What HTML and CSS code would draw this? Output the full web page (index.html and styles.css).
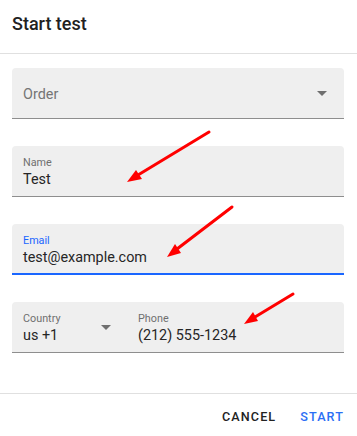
FILE: index.html
```html
<!DOCTYPE html>
<html lang="en">
<head>
    <meta charset="UTF-8">
    <meta name="viewport" content="width=device-width, initial-scale=1.0">
    <title>Start test</title>
    <link rel="stylesheet" href="styles.css">
</head>
<body>
    <div class="dialog">
        <h1 class="dialog-title">Start test</h1>
        <div class="dialog-content">
            <div class="field select-field">
                <span class="placeholder">Order</span>
                <span class="caret"></span>
            </div>
            <div class="field">
                <label class="field-label">Name</label>
                <div class="field-value">Test</div>
            </div>
            <div class="field focused">
                <label class="field-label">Email</label>
                <div class="field-value">test@example.com</div>
            </div>
            <div class="field phone-field">
                <div class="country">
                    <div>
                        <label class="field-label">Country</label>
                        <div class="field-value">us +1</div>
                    </div>
                    <span class="caret"></span>
                </div>
                <div class="phone">
                    <label class="field-label">Phone</label>
                    <div class="field-value">(212) 555-1234</div>
                </div>
            </div>
        </div>
        <div class="dialog-actions">
            <button class="btn">Cancel</button>
            <button class="btn primary">Start</button>
        </div>
    </div>

    <!-- annotation arrows drawn over the screenshot -->
    <svg class="annotations" width="357" height="436" viewBox="0 0 357 436">
        <g stroke="#ff0000" stroke-width="3" stroke-linecap="round" fill="#ff0000">
            <line x1="209" y1="132" x2="138" y2="175"/>
            <polygon stroke="none" points="127,182 136,170 142,179"/>
            <line x1="232" y1="207" x2="177" y2="249"/>
            <polygon stroke="none" points="167,257 175,244 181,253"/>
            <line x1="293" y1="294" x2="255" y2="317"/>
            <polygon stroke="none" points="244,324 253,312 258,321"/>
        </g>
    </svg>
</body>
</html>
```

FILE: styles.css
```css
body {
    margin: 0;
    font-family: 'Roboto', 'Noto Sans', sans-serif;
    background: #fff;
    color: #222;
    position: relative;
    width: 357px;
    height: 436px;
    overflow: hidden;
}
.dialog-title {
    margin: 0;
    height: 53px;
    line-height: 48px;
    padding: 0 12px;
    font-size: 18px;
    font-weight: 500;
    color: #212121;
    border-bottom: 1px solid #e0e0e0;
}
.dialog-content {
    padding: 14px 13px 40px 12px;
    display: flex;
    flex-direction: column;
    gap: 27px;
}
.field {
    background: #efefef;
    border-radius: 4px 4px 0 0;
    border-bottom: 1px solid #8e8e8e;
    padding: 10px 11px 7px;
}
.field-label {
    display: block;
    font-size: 10.8px;
    line-height: 14px;
    color: #6f6f6f;
}
.field-value {
    font-size: 14.4px;
    line-height: 19px;
    color: #262626;
}
.focused {
    border-bottom: 2px solid #1a66ff;
    padding-bottom: 6px;
}
.focused .field-label {
    color: #1a66ff;
}
.select-field {
    height: 51px;
    box-sizing: border-box;
    padding: 0 17px 0 11px;
    display: flex;
    align-items: center;
    justify-content: space-between;
}
.placeholder {
    font-size: 14.4px;
    color: #757575;
    margin-top: 3px;
}
.caret {
    width: 0;
    height: 0;
    border-left: 5px solid transparent;
    border-right: 5px solid transparent;
    border-top: 5px solid #6f6f6f;
}
.phone-field {
    display: flex;
    padding-left: 0;
    padding-right: 0;
}
.country {
    width: 115px;
    box-sizing: border-box;
    padding: 0 16px 0 11px;
    display: flex;
    justify-content: space-between;
    align-items: center;
}
.country .caret {
    margin-bottom: 2px;
}
.phone {
    padding-left: 11px;
}
.dialog-actions {
    border-top: 1px solid #e0e0e0;
    height: 42px;
    display: flex;
    justify-content: flex-end;
    align-items: center;
    padding: 0 6px;
    gap: 10px;
}
.btn {
    background: none;
    border: none;
    font-family: inherit;
    font-size: 12.6px;
    font-weight: 500;
    letter-spacing: 1.1px;
    text-transform: uppercase;
    color: #222;
    padding: 7px 7px;
    margin-top: 3px;
    cursor: pointer;
}
.btn.primary {
    color: #2a6ef5;
}
.annotations {
    position: absolute;
    top: 0;
    left: 0;
    pointer-events: none;
}
```
